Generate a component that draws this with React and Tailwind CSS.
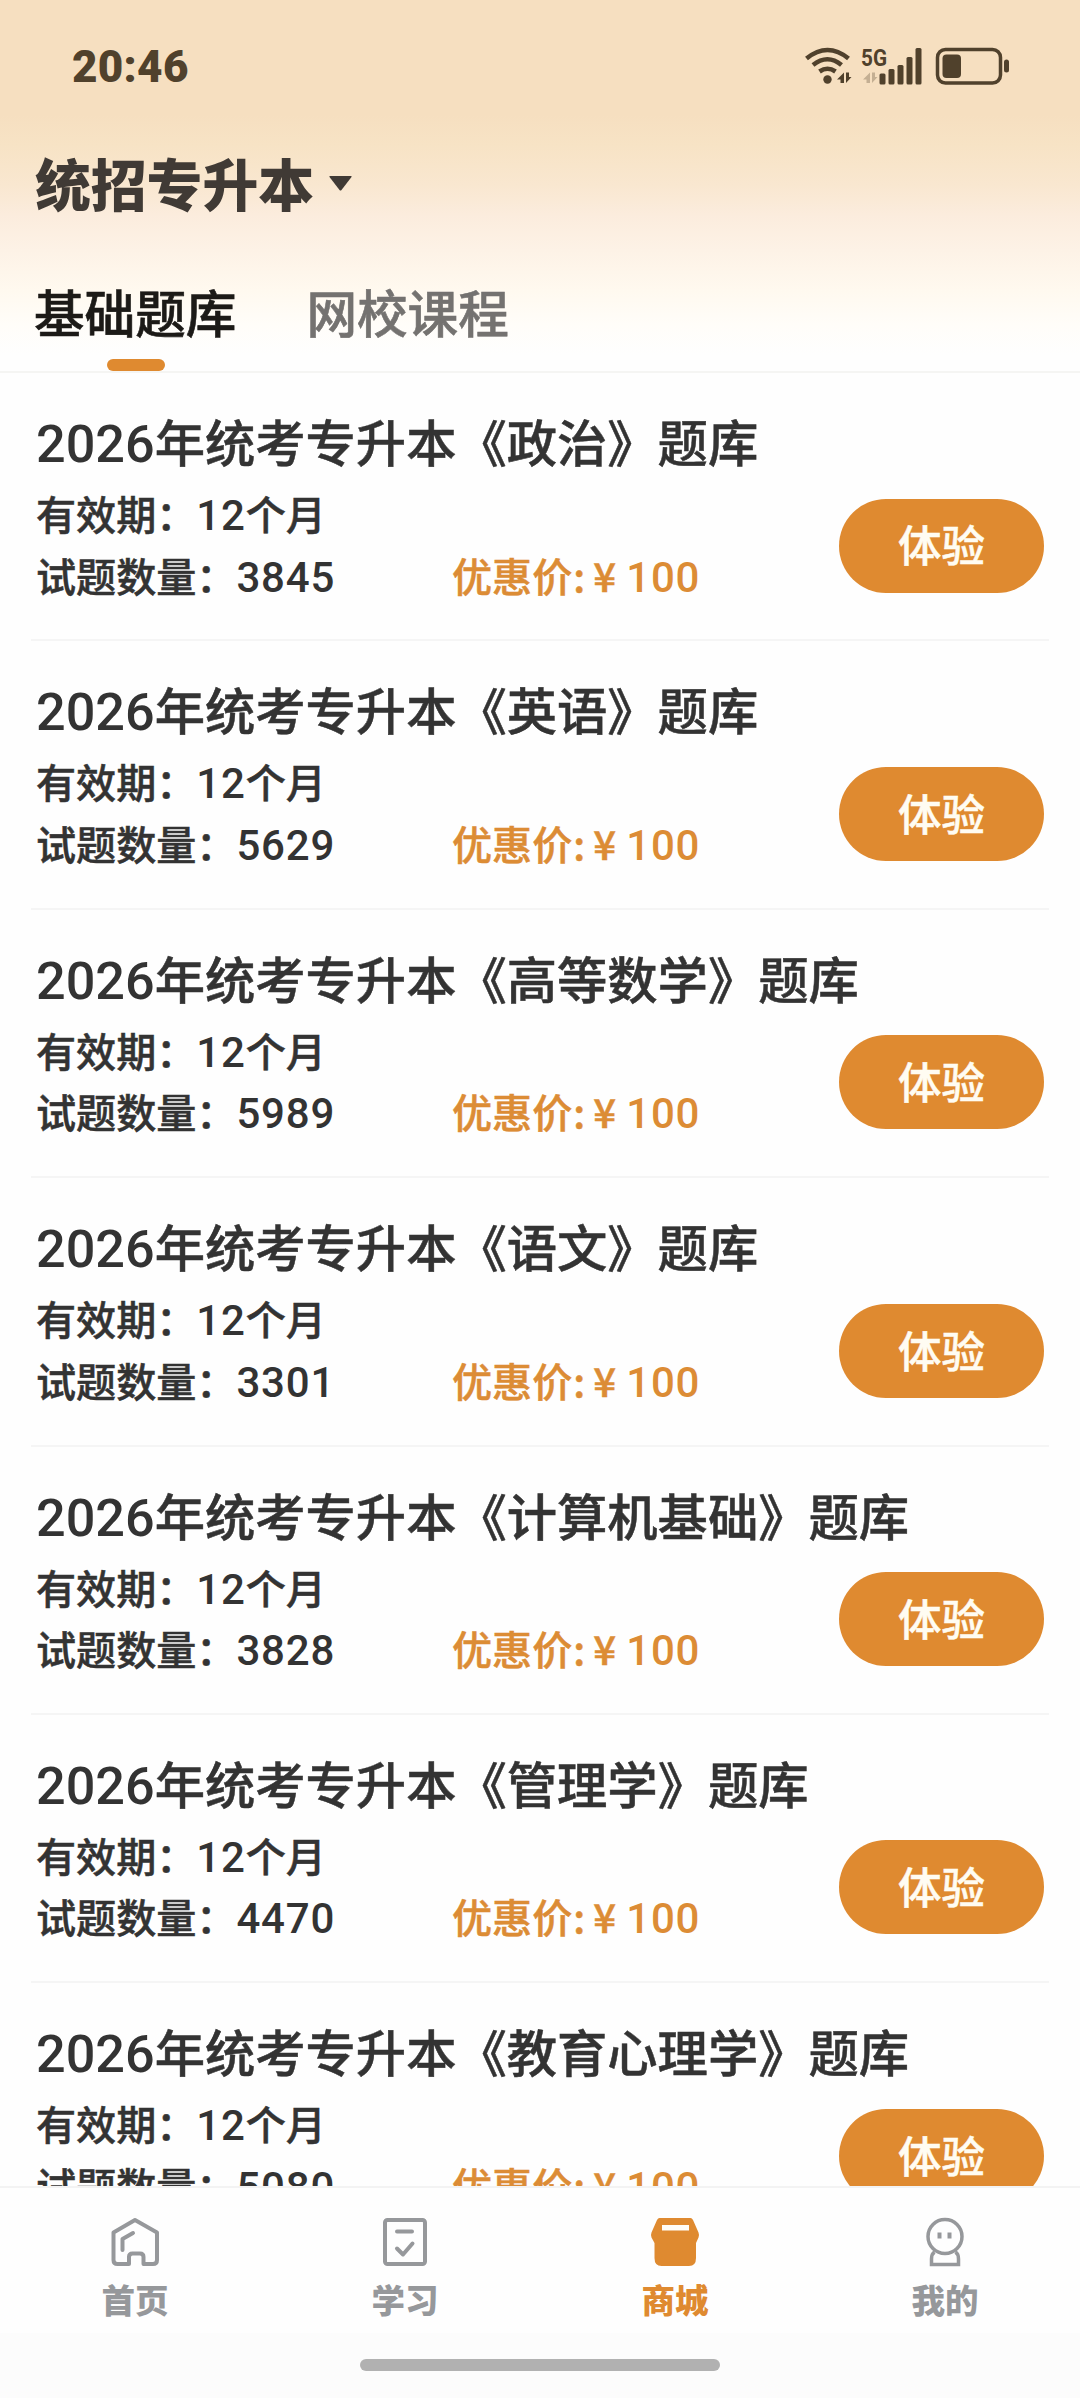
import React from "react";

const courses = [
  { name: "政治", count: "3845" },
  { name: "英语", count: "5629" },
  { name: "高等数学", count: "5989" },
  { name: "语文", count: "3301" },
  { name: "计算机基础", count: "3828" },
  { name: "管理学", count: "4470" },
  { name: "教育心理学", count: "5080" },
];

function StatusIcons() {
  return (
    <svg className="overflow-visible" width="206" height="40" viewBox="806 46 206 40" fill="none" stroke="#50412c" strokeLinecap="round">
      <g strokeWidth="4.6" strokeLinecap="butt">
        <path d="M807.5 58.5Q828.5 41.500 849.500 58.500" />
        <path d="M814 65Q828.500 53.500 842.500 65" />
        <path d="M820.500 71.500Q828.500 66 836.500 71.500" />
      </g>
      <circle cx="828.500" cy="79.500" r="4.200" fill="#50412c" stroke="none" />
      <g fill="#50412c" stroke="none">
        <path d="M845 72.500V83H841.500V79.500H838ZM847 72.500V83L852.500 77H850V72.500Z" />
        <path opacity=".3" d="M871 72.500V83H867.500V79.500H864ZM873 72.500V83L878.500 77H876V72.500Z" />
        <text x="862" y="65.500" fontSize="24" fontWeight="700" fontFamily="Roboto, sans-serif" textLength="26" lengthAdjust="spacingAndGlyphs">5G</text>
        <rect x="880.500" y="73.500" width="6" height="11" rx="1.500" />
        <rect x="889.500" y="69" width="6" height="15.500" rx="1.500" />
        <rect x="898.500" y="65" width="6" height="19.500" rx="1.500" />
        <rect x="907.500" y="57" width="6" height="27.500" rx="1.500" />
        <rect x="916.500" y="48" width="6" height="36.500" rx="1.500" />
        <rect x="943.500" y="54.500" width="18.500" height="23.500" rx="4" />
        <rect x="1005" y="59.500" width="5" height="13" rx="2.500" />
      </g>
      <rect x="938.500" y="49.500" width="63" height="33.500" rx="8" strokeWidth="3.500" />
    </svg>
  );
}

function HomeIcon() {
  return (
    <svg width="50" height="50" viewBox="0 0 50 50" fill="none" stroke="currentColor" strokeWidth="4" strokeLinejoin="round" strokeLinecap="round">
      <path d="M25 3L47 15.500V43Q47 47 43 47H33.500V40Q33.500 36.500 30 36.500H22.500Q19 36.500 19 40V47H7.500Q3.500 47 3.500 43V15.500Z" />
      <path d="M23 16L12.500 22V33" />
    </svg>
  );
}

function StudyIcon() {
  return (
    <svg width="50" height="50" viewBox="0 0 50 50" fill="none" stroke="currentColor" strokeWidth="4" strokeLinejoin="round" strokeLinecap="round">
      <rect x="5" y="3" width="40" height="44" rx="2.500" />
      <path d="M17 14.500H32" />
      <path d="M17 31.500L23 37.500L32.500 26.500" />
    </svg>
  );
}

function ShopIcon() {
  return (
    <svg width="50" height="50" viewBox="0 0 50 50" fill="currentColor">
      <path d="M9.500 1H40.500Q42 1 43 3L48.500 15.500Q49.500 18 48.500 20.500L46 26V41Q46 49 39 49H11.500Q4.500 49 4.500 41V26L1.500 20.500Q.5 18 1.500 15.500L7 3Q8 1 9.500 1Z" />
      <path fill="#fffdf8" d="M12 8H39V13.500H12Z" />
    </svg>
  );
}

function MineIcon() {
  return (
    <svg width="50" height="50" viewBox="0 0 50 50" fill="none" stroke="currentColor" strokeWidth="3.500">
      <circle cx="25" cy="19.500" r="17" />
      <path d="M14.500 35Q11.500 37 11.500 42V47.500H38.500V42Q38.500 37 35.500 35" />
      <path d="M19.500 15.500V21.500M29.500 15.500V21.500" strokeWidth="4" />
    </svg>
  );
}

const tabs = [
  { label: "首页", Icon: HomeIcon },
  { label: "学习", Icon: StudyIcon },
  { label: "商城", Icon: ShopIcon, active: true },
  { label: "我的", Icon: MineIcon },
];

function Digits({ children }) {
  return <span className="font-['Roboto',sans-serif] text-[42px] leading-none tracking-[0.8px] [-webkit-text-stroke:0px]">{children}</span>;
}

function CourseRow({ name, count }) {
  return (
    <div className="mx-[31px] h-[268.4px] shrink-0 border-b-2 border-[#f5f5f5] pl-[5px] pr-[5px] pt-[37px] text-[#333333] [-webkit-text-stroke:0.5px_currentColor]">
      <h2 className="h-[60px] whitespace-nowrap text-[50.3px] font-medium leading-[60px]">
        <span className="font-['Roboto',sans-serif] text-[52.200px] leading-none [-webkit-text-stroke:0px]">2026</span>年统考专升本《{name}》题库
      </h2>
      <div className="mt-[12px] flex justify-between">
        <div className="text-[40.1px] font-medium leading-[61.500px]">
          <div className="h-[61.500px]">
            有效期：<Digits>12</Digits>个月
          </div>
          <div className="flex h-[61.500px]">
            <div className="w-[416px]">
              试题数量：<Digits>{count}</Digits>
            </div>
            <div className="flex text-[#dc8c35]">
              <span>优惠价</span>
              <span className="w-[21px] pl-[1px]">:</span>
              <span className="w-[33px]">¥</span>
              <span><Digits>100</Digits></span>
            </div>
          </div>
        </div>
        <button className="mt-[16.500px] h-[94px] w-[205px] rounded-full bg-[#df8a30] pb-[3px] text-[43.500px] font-medium text-[#fffcf2]">
          体验
        </button>
      </div>
    </div>
  );
}

export default function App() {
  return (
    <div className="flex h-[2398px] w-[1080px] flex-col overflow-hidden bg-[#fefefe] font-['Noto_Sans_CJK_SC',sans-serif]">
      <header className="flex h-[373px] shrink-0 flex-col border-b-2 border-[#f5f5f3] bg-[linear-gradient(to_bottom,#f6dfc0_0px,#f6dfc0_115px,#f7e3c5_145px,#f9e7d0_185px,#fbecdd_215px,#fdf2e6_250px,#fff9ef_290px,#fffdf9_325px,#fefefe_355px)]">
        <div className="flex h-[132px] items-center justify-between pl-[72px] pr-[69px]">
          <span className="mt-[2px] font-['Roboto',sans-serif] text-[44px] font-black leading-none tracking-[0.300px] text-[#50412c]">20:46</span>
          <StatusIcons />
        </div>
        <div className="flex h-[106px] items-center pl-[35px] text-[#403a35]">
          <span className="-mt-[7px] text-[55.8px] font-black leading-none">统招专升本</span>
          <svg className="-mt-[4px] ml-[15px]" width="23" height="15" viewBox="0 0 23 15" fill="currentColor">
            <path d="M1 0H22Q23 0 22.500 1L12.500 14Q11.500 15 10.500 14L.5 1Q0 0 1 0Z" />
          </svg>
        </div>
        <nav className="flex h-[133px] gap-[70px] pl-[34px] text-[50.6px] font-medium leading-[146px] [-webkit-text-stroke:0.6px_currentColor]">
          <span className="relative text-[#1c1a17]">
            基础题库
            <i className="absolute left-[73px] top-[121px] h-[12px] w-[58px] rounded-full bg-[#df8a30]" />
          </span>
          <span className="text-[#747270]">网校课程</span>
        </nav>
      </header>

      <main className="flex min-h-0 flex-1 flex-col overflow-hidden">
        {courses.map((course) => (
          <CourseRow key={course.name} {...course} />
        ))}
      </main>

      <footer className="flex h-[212px] shrink-0 flex-col border-t-2 border-[#f3f3f3] bg-[#fefefe]">
        <nav className="grid h-[145px] grid-cols-4">
          {tabs.map(({ label, Icon, active }) => (
            <a key={label} className={`flex flex-col items-center pt-[29px] ${active ? "text-[#df8a30]" : "text-[#96989b]"}`}>
              <Icon />
              <span className="mt-[15px] text-[33.500px] font-black leading-[34px]">{label}</span>
            </a>
          ))}
        </nav>
        <div className="flex flex-1 justify-center bg-[#fcfcfc] pt-[26px]">
          <div className="h-[12px] w-[360px] rounded-full bg-[#b1b1b1]" />
        </div>
      </footer>
    </div>
  );
}
